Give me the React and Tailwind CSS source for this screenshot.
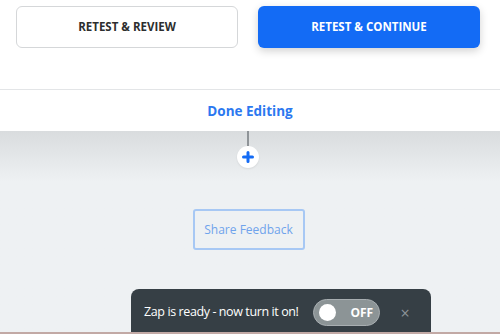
import React, { useState } from "react";

const App = () => {
  const [on, setOn] = useState(false);

  return (
    <div
      className="relative h-[334px] w-[500px] overflow-hidden bg-[#eef1f3]"
      style={{ fontFamily: '"Open Sans", "Noto Sans", sans-serif' }}
    >
      {/* Action buttons */}
      <div className="flex h-[89px] items-start gap-5 bg-white px-4 pt-[6px]">
        <button className="h-[42px] w-[222px] rounded-[6px] border border-[#d5d7d9] bg-white text-[11.5px] font-bold text-[#2d2e2e]">
          RETEST &amp; REVIEW
        </button>
        <button className="h-[42px] w-[222px] rounded-[6px] bg-[#136bf5] text-[11.5px] font-bold text-white shadow-[0_3px_8px_rgba(0,0,0,0.18)]">
          RETEST &amp; CONTINUE
        </button>
      </div>

      {/* Done editing bar */}
      <div className="flex h-[42px] items-center justify-center border-t border-[#e3e5e7] bg-white pt-[1px]">
        <span className="text-[13.5px] font-bold text-[#2b78f0]">Done Editing</span>
      </div>

      {/* Canvas */}
      <div className="relative h-[203px] bg-gradient-to-b from-[#d9dcde] via-[#eef1f3] via-[25%] to-[#eef1f3]">
        <div className="flex flex-col items-center">
          <div className="ml-[-4px] h-[15px] w-[2px] bg-[#8f9498]" />
          <div className="ml-[-4px] flex h-[22px] w-[22px] items-center justify-center rounded-full bg-white shadow-[0_1px_2px_rgba(0,0,0,0.08)]">
            <svg width="12" height="12" viewBox="0 0 12 12">
              <path d="M6 1.5v9M1.5 6h9" stroke="#136bf5" strokeWidth="3" strokeLinecap="round" />
            </svg>
          </div>
          <button className="ml-[-3px] mt-[41px] h-[41px] w-[112px] rounded-[3px] border-2 border-[#a7c8f4] text-[12px] text-[#6fa3ec]">
            Share Feedback
          </button>
        </div>

        {/* Toast */}
        <div className="absolute left-[131px] top-[158px] flex h-[50px] w-[300px] items-start rounded-t-[8px] bg-[#363f45] pl-[13px] pt-[10px]">
          <span className="mt-[4px] text-[12.5px] tracking-[-0.4px] text-white">Zap is ready - now turn it on!</span>
          <button
            onClick={() => setOn(!on)}
            className="ml-[15px] flex h-[27px] w-[67px] items-center rounded-full border border-[#a8aeb1] bg-[#8c9496] px-[5px]"
          >
            <span className="h-[17px] w-[17px] rounded-full bg-white" />
            <span className="ml-[14px] text-[12px] font-bold text-white">OFF</span>
          </button>
          <span className="ml-[20px] mt-[4px] text-[16px] leading-[20px] text-[#8d9599]">×</span>
        </div>
      </div>

      {/* Bottom strip */}
      <div className="absolute bottom-0 left-0 h-[2px] w-full bg-[#c2a9a5]" />
    </div>
  );
};

export default App;
